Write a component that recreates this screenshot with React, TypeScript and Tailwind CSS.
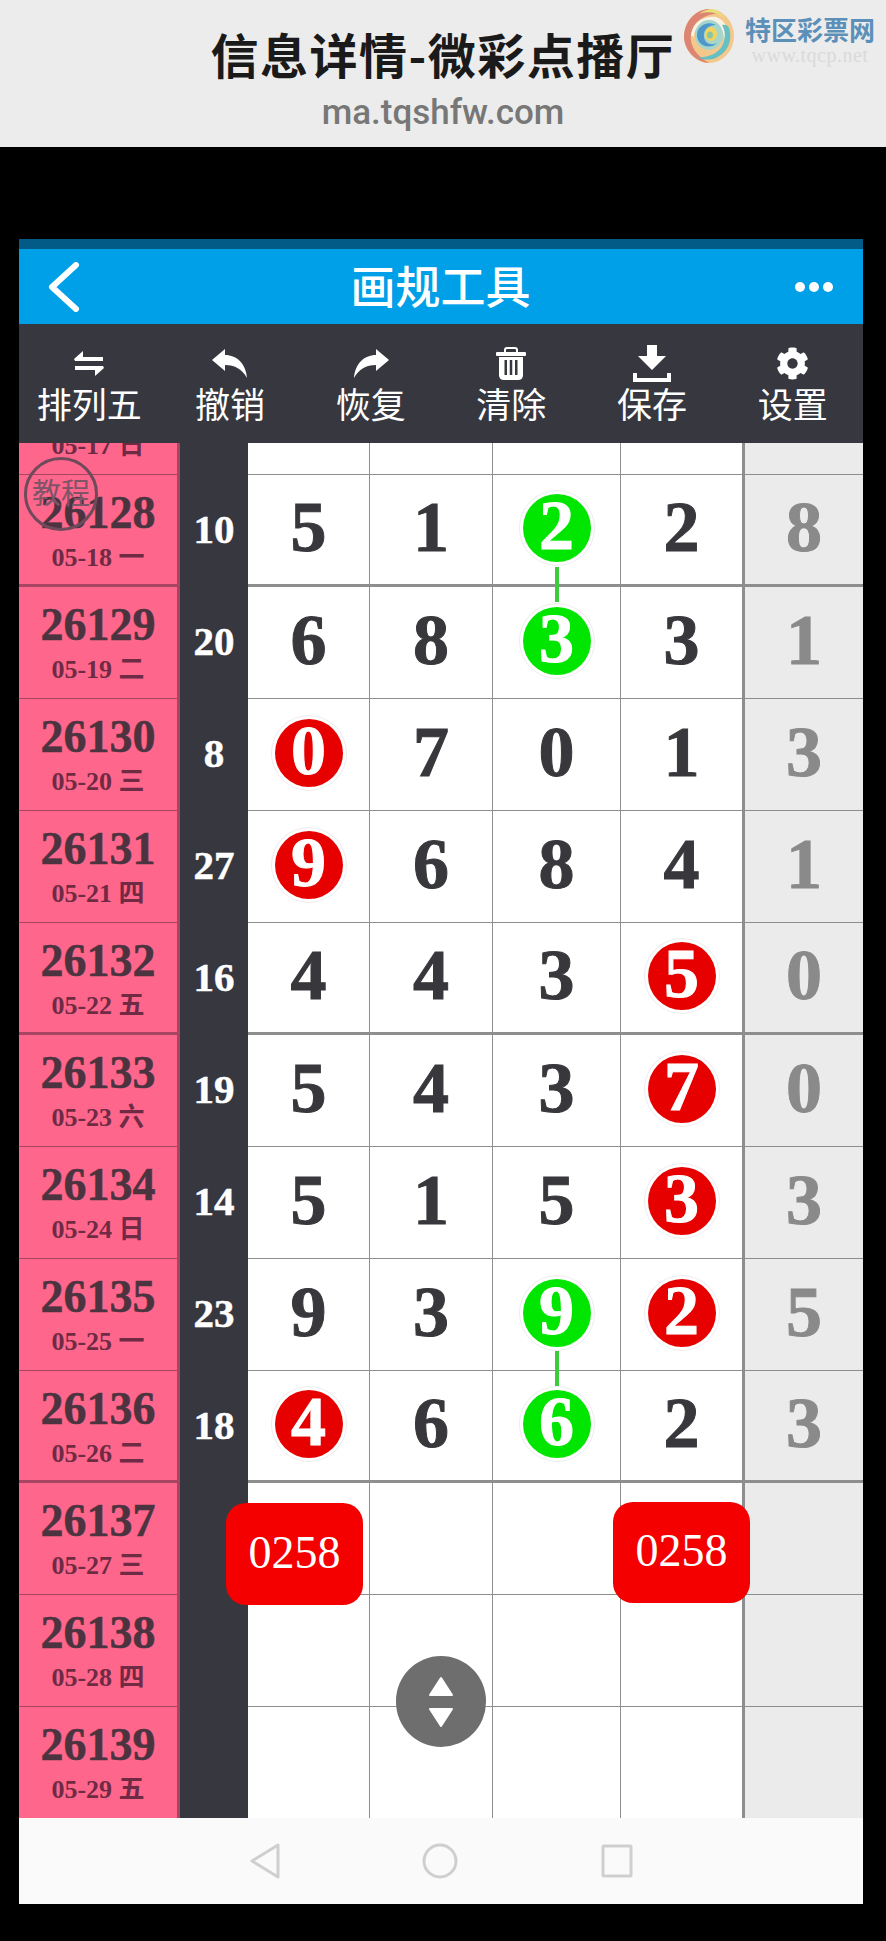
import { FaCog } from 'react-icons/fa';

type Ball = 'r' | 'g';
type Cell = { v: string; ball?: Ball };

const serif = "[font-family:'Liberation_Serif','Noto_Sans_CJK_SC',serif]";

const ROWS: { id: string; date: string; sum: string; cells: Cell[]; thick?: boolean; last?: boolean }[] = [
  { id: '26127', date: '05-17 日', sum: '', cells: [] },
  { id: '26128', date: '05-18 一', sum: '10', thick: true, cells: [{ v: '5' }, { v: '1' }, { v: '2', ball: 'g' }, { v: '2' }, { v: '8' }] },
  { id: '26129', date: '05-19 二', sum: '20', cells: [{ v: '6' }, { v: '8' }, { v: '3', ball: 'g' }, { v: '3' }, { v: '1' }] },
  { id: '26130', date: '05-20 三', sum: '8', cells: [{ v: '0', ball: 'r' }, { v: '7' }, { v: '0' }, { v: '1' }, { v: '3' }] },
  { id: '26131', date: '05-21 四', sum: '27', cells: [{ v: '9', ball: 'r' }, { v: '6' }, { v: '8' }, { v: '4' }, { v: '1' }] },
  { id: '26132', date: '05-22 五', sum: '16', thick: true, cells: [{ v: '4' }, { v: '4' }, { v: '3' }, { v: '5', ball: 'r' }, { v: '0' }] },
  { id: '26133', date: '05-23 六', sum: '19', cells: [{ v: '5' }, { v: '4' }, { v: '3' }, { v: '7', ball: 'r' }, { v: '0' }] },
  { id: '26134', date: '05-24 日', sum: '14', cells: [{ v: '5' }, { v: '1' }, { v: '5' }, { v: '3', ball: 'r' }, { v: '3' }] },
  { id: '26135', date: '05-25 一', sum: '23', cells: [{ v: '9' }, { v: '3' }, { v: '9', ball: 'g' }, { v: '2', ball: 'r' }, { v: '5' }] },
  { id: '26136', date: '05-26 二', sum: '18', thick: true, cells: [{ v: '4', ball: 'r' }, { v: '6' }, { v: '6', ball: 'g' }, { v: '2' }, { v: '3' }] },
  { id: '26137', date: '05-27 三', sum: '', cells: [] },
  { id: '26138', date: '05-28 四', sum: '', cells: [] },
  { id: '26139', date: '05-29 五', sum: '', cells: [], last: true },
];

function ExchangeIcon() {
  return (
    <svg width="30" height="25" viewBox="0 0 30 25" fill="white">
      <path d="M9 0 L0 8 L1 10 L29 10 L29 6 L9 6 Z" />
      <path d="M21 25 L30 17 L29 15 L1 15 L1 19 L21 19 Z" />
    </svg>
  );
}

function UndoIcon({ flip }: { flip?: boolean }) {
  return (
    <svg width="36" height="29" viewBox="0 0 36 29" fill="white" className={flip ? '-scale-x-100' : ''}>
      <path d="M0 11 L13 0 V6 C25 6 34 15 35 29 C30 20 23 16 13 16 V22 Z" />
    </svg>
  );
}

function TrashIcon() {
  return (
    <svg width="30" height="33" viewBox="0 0 30 33" fill="white">
      <path d="M9 6 V3 Q9 1 11 1 H19 Q21 1 21 3 V6" fill="none" stroke="white" strokeWidth="2" />
      <rect x="0" y="5" width="30" height="4" rx="1" />
      <path d="M3 10 H27 V28 Q27 33 22 33 H8 Q3 33 3 28 Z" />
      <rect x="8.5" y="13" width="2.5" height="15" fill="#37383f" />
      <rect x="13.75" y="13" width="2.5" height="15" fill="#37383f" />
      <rect x="19" y="13" width="2.5" height="15" fill="#37383f" />
    </svg>
  );
}

function SaveIcon() {
  return (
    <svg width="38" height="37" viewBox="0 0 38 37" fill="white">
      <path d="M14 0 H24 V11 H33 L19 25 L5 11 H14 Z" />
      <path d="M0 28 H4 V33 H34 V28 H38 V37 H0 Z" />
    </svg>
  );
}

const TOOLS = [
  { label: '排列五', icon: <ExchangeIcon /> },
  { label: '撤销', icon: <UndoIcon /> },
  { label: '恢复', icon: <UndoIcon flip /> },
  { label: '清除', icon: <TrashIcon /> },
  { label: '保存', icon: <SaveIcon /> },
  { label: '设置', icon: <FaCog size={33} /> },
];

function Logo() {
  return (
    <div className="absolute top-[8px] right-[11px] flex gap-[10px]">
      <svg width="52" height="56" viewBox="0 0 52 56" fill="none">
        <ellipse cx="26" cy="28" rx="25" ry="27" fill="#f3c88a" />
        <path d="M24 1 C9 4 1 16 1 30 C2 42 12 54 26 55 C14 48 6 38 8 26 C10 14 20 6 38 5 C33 2 29 1 24 1 Z" fill="#dd8573" />
        <path d="M30 1 C24 1 20 3 16 6 C24 3 34 4 42 10 C38 5 35 2 30 1 Z" fill="#e8e07a" />
        <path d="M8 28 C9 15 20 7 33 9 C43 12 48 24 45 35 C42 45 32 51 22 50 C32 48 40 42 41 32 C42 22 34 13 24 14 C15 16 10 22 11 32 C11 28 10 28 8 28 Z" fill="#f7f1e6" />
        <path d="M46 20 C50 32 45 46 30 51 C24 52 19 52 15 49 C24 50 36 46 40 36 C43 28 42 22 39 17 C42 16 45 17 46 20 Z" fill="#66bfc2" />
        <ellipse cx="26" cy="27" rx="14" ry="15" fill="#a6d5cb" />
        <path d="M14 27 C14 18 24 12 33 17 C25 17 20 22 21 29 C22 35 27 38 34 35 C27 42 14 38 14 27 Z" fill="#4e97c9" />
        <ellipse cx="28" cy="26" rx="6" ry="7" fill="#f1d35e" />
        <ellipse cx="27" cy="27" rx="3" ry="3.5" fill="#8cc6a0" />
      </svg>
      <div className="flex flex-col items-center pt-[5px]">
        <span className="text-[26px] leading-[32px] font-bold text-[#5c90b8] [font-family:'Noto_Sans_CJK_SC',sans-serif]">特区彩票网</span>
        <span className={`mt-[2px] text-[20px] leading-[16px] tracking-[0.5px] text-[#dadada] ${serif}`}>www.tqcp.net</span>
      </div>
    </div>
  );
}

function GridCell({ cell, index, connectDown }: { cell?: Cell; index: number; connectDown: boolean }) {
  const isLast = index === 4;
  return (
    <div
      className={
        isLast
          ? 'relative flex items-center justify-center border-l-[3px] border-[#8e8e8e] bg-[#ebebeb]'
          : index === 0
            ? 'relative flex items-center justify-center bg-white'
            : 'relative flex items-center justify-center border-l-[1.5px] border-[#8e8e8e] bg-white'
      }
    >
      {cell && !cell.ball && (
        <span className={`pb-[6px] text-[72px] leading-none font-bold [-webkit-text-stroke:1px_currentColor] ${serif} ${isLast ? 'text-[#8a8a8a]' : 'text-[#38383c]'}`}>
          {cell.v}
        </span>
      )}
      {cell?.ball && (
        <span
          className={`relative z-10 mb-[4px] flex h-[68px] w-[68px] items-center justify-center rounded-full text-[70px] leading-none font-bold text-white shadow-[0_0_0_3px_#ffffff,0_0_0_4px_#ececec] [-webkit-text-stroke:1px_currentColor] ${serif} ${
            cell.ball === 'r' ? 'bg-[#e60000]' : 'bg-[#00e600]'
          }`}
        >
          <span className="pb-[4px]">{cell.v}</span>
        </span>
      )}
      {connectDown && <span className="absolute top-[92px] left-1/2 z-20 h-[35px] w-[4px] -translate-x-1/2 bg-[#3fc93f]" />}
    </div>
  );
}

function Row({ row }: { row: (typeof ROWS)[number] }) {
  const line = row.last ? '' : row.thick ? 'border-b-[3px]' : 'border-b-[1.5px]';
  return (
    <div className="grid h-[112px] grid-cols-[161px_68px_121px_123px_128px_122px_121px]">
      <div className={`flex flex-col items-center bg-[#ff668b] pt-[12px] ${line} border-r-[3px] border-b-[#a84563] border-r-[#a84563] ${serif}`}>
        <span className="text-[46px] leading-[52px] font-bold text-[#4c3340] [-webkit-text-stroke:0.5px_currentColor]">{row.id}</span>
        <span className="mt-[2px] text-[26px] leading-[34px] font-bold text-[#6f2a44]">{row.date}</span>
      </div>
      <div className={`flex items-center justify-center bg-[#37383f] pb-[3px] text-[41px] leading-none font-bold text-white [-webkit-text-stroke:0.5px_currentColor] ${serif}`}>{row.sum}</div>
      {[0, 1, 2, 3, 4].map((i) => (
        <div key={i} className={`grid ${line} border-b-[#8e8e8e]`}>
          <GridCell cell={row.cells[i]} index={i} connectDown={i === 2 && (row.id === '26128' || row.id === '26135')} />
        </div>
      ))}
    </div>
  );
}

export default function App() {
  return (
    <div className="flex h-[1941px] w-[886px] flex-col overflow-hidden bg-black [font-family:'Noto_Sans_CJK_SC',sans-serif]">
      <header className="relative flex h-[147px] flex-col items-center bg-[#ececec]">
        <h1 className="mt-[19px] text-[48px] leading-[68px] font-bold tracking-[1.5px] text-[#1a1a1a]">信息详情-微彩点播厅</h1>
        <p className="mt-[5px] text-[35px] leading-[42px] font-medium text-[#777777] [font-family:Roboto,sans-serif]">ma.tqshfw.com</p>
        <Logo />
      </header>

      <main className="mt-[92px] ml-[19px] flex w-[844px] flex-col">
        <div className="h-[10px] bg-[#025a86]" />
        <div className="grid h-[75px] grid-cols-[1fr_auto_1fr] items-center bg-[#00a0e9] pr-[30px] pl-[29px]">
          <svg width="32" height="50" viewBox="0 0 32 50" fill="none" stroke="white" strokeWidth="6" strokeLinecap="round" strokeLinejoin="round">
            <path d="M28 3 L4 25 L28 47" />
          </svg>
          <h2 className="pb-[4px] text-[45px] leading-none font-medium text-white">画规工具</h2>
          <div className="flex justify-end gap-[4px]">
            <span className="h-[10px] w-[10px] rounded-full bg-white" />
            <span className="h-[10px] w-[10px] rounded-full bg-white" />
            <span className="h-[10px] w-[10px] rounded-full bg-white" />
          </div>
        </div>

        <nav className="flex h-[119px] bg-[#37383f] text-white">
          {TOOLS.map((t) => (
            <button key={t.label} type="button" className="flex flex-1 flex-col items-center pt-[20px]">
              <span className="flex h-[38px] items-center">{t.icon}</span>
              <span className="text-[35px] leading-[42px]">{t.label}</span>
            </button>
          ))}
        </nav>

        <section className="relative h-[1375px] overflow-hidden">
          <div className="-mt-[80px]">
            {ROWS.map((r) => (
              <Row key={r.id} row={r} />
            ))}
          </div>

          {/* tutorial stamp */}
          <div className="absolute top-[14px] left-[5px] flex h-[74px] w-[74px] items-center justify-center rounded-full border-[3px] border-[#6f4a5c] pb-[5px] text-[29px] leading-none text-[#7d5468]">
            教程
          </div>

          {/* forecast badges */}
          <div className={`absolute top-[1060px] left-[207px] flex h-[102px] w-[137px] items-center justify-center rounded-[20px] bg-[#f40000] pb-[4px] text-[46px] text-white ${serif}`}>0258</div>
          <div className={`absolute top-[1059px] left-[594px] flex h-[101px] w-[137px] items-center justify-center rounded-[20px] bg-[#f40000] pb-[4px] text-[46px] text-white ${serif}`}>0258</div>

          {/* scroll handle */}
          <div className="absolute top-[1213px] left-[377px] flex h-[91px] w-[90px] flex-col items-center justify-center gap-[12px] rounded-full bg-[#6e6e6e]">
            <svg width="26" height="20" viewBox="0 0 26 20" fill="white" stroke="white" strokeWidth="2" strokeLinejoin="round">
              <path d="M13 2 L24 19 H2 Z" />
            </svg>
            <svg width="26" height="20" viewBox="0 0 26 20" fill="white" stroke="white" strokeWidth="2" strokeLinejoin="round">
              <path d="M13 18 L24 1 H2 Z" />
            </svg>
          </div>
        </section>

        <div className="flex h-[86px] items-center bg-[#fafafa]">
          <svg width="844" height="40" viewBox="0 0 844 40" fill="none" stroke="#cfcfcf" strokeWidth="3">
            <path d="M259 4 L233 20 L259 36 Z" strokeLinejoin="round" />
            <ellipse cx="421" cy="20" rx="16" ry="16" />
            <rect x="584" y="5" width="28" height="30" rx="1" />
          </svg>
        </div>
      </main>
    </div>
  );
}
